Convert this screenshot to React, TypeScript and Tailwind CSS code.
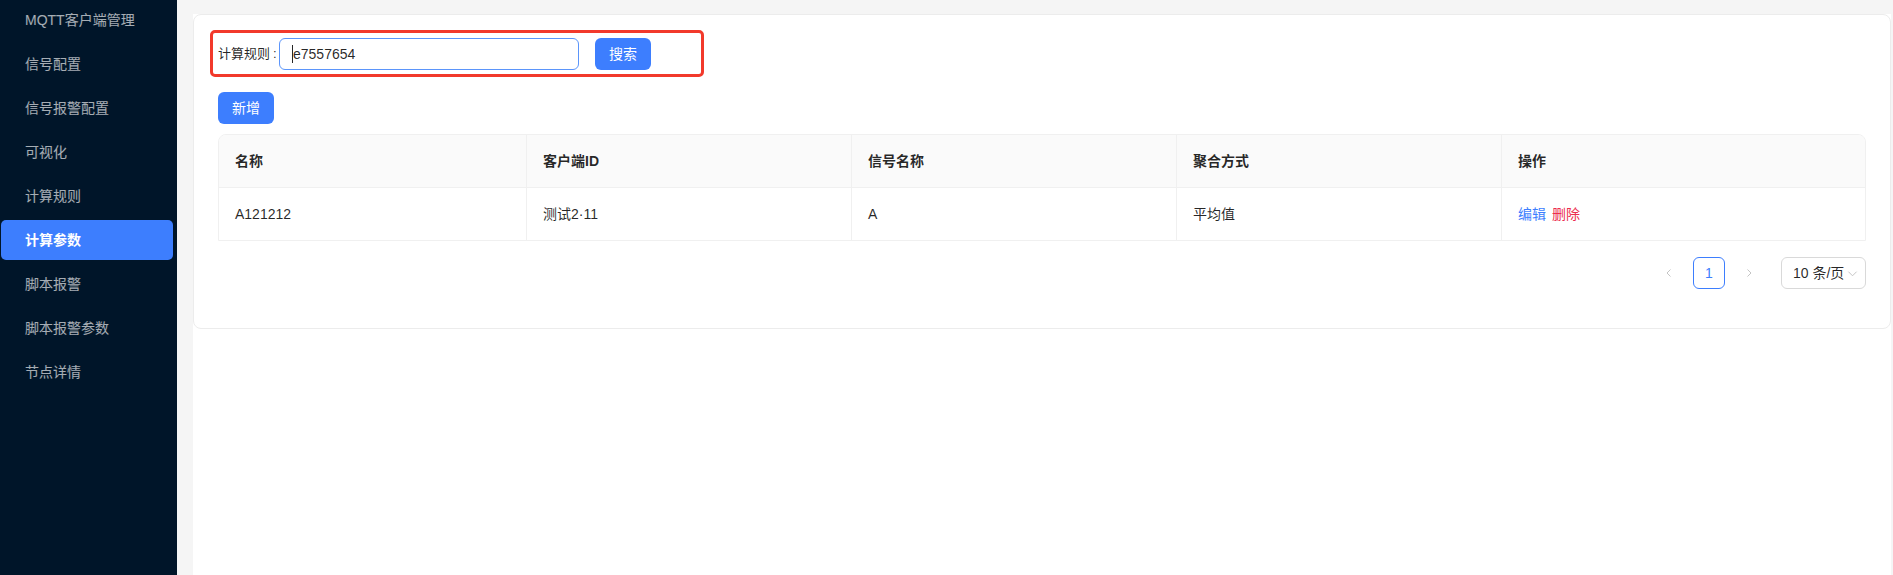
import React from 'react';

const menuItems = [
  'MQTT客户端管理',
  '信号配置',
  '信号报警配置',
  '可视化',
  '计算规则',
  '计算参数',
  '脚本报警',
  '脚本报警参数',
  '节点详情',
];

const columns = ['名称', '客户端ID', '信号名称', '聚合方式', '操作'];

function Sidebar() {
  return (
    <aside className="w-[177px] shrink-0 bg-[#001529]">
      <ul>
        {menuItems.map((item) => {
          const active = item === '计算参数';
          return (
            <li
              key={item}
              className={`mb-1 ml-[1px] flex h-10 w-[172px] items-center rounded-[5px] pl-6 text-[14px] ${
                active ? 'bg-[#3d7efe] text-white font-semibold' : 'text-white/65'
              }`}
            >
              {item}
            </li>
          );
        })}
      </ul>
    </aside>
  );
}

function Pagination() {
  return (
    <div className="mt-4 flex items-center justify-end">
      <span className="flex h-8 w-8 items-center justify-center text-[#c4c4c4]">
        <svg width="10" height="10" viewBox="0 0 10 10" fill="none" stroke="currentColor" strokeWidth="1">
          <path d="M6.5 1.5 3 5l3.5 3.5" />
        </svg>
      </span>
      <span className="ml-2 flex h-8 w-8 items-center justify-center rounded-md border border-[#3d7efe] text-[14px] text-[#3d7efe]">
        1
      </span>
      <span className="ml-2 flex h-8 w-8 items-center justify-center text-[#c4c4c4]">
        <svg width="10" height="10" viewBox="0 0 10 10" fill="none" stroke="currentColor" strokeWidth="1">
          <path d="M3.5 1.5 7 5 3.5 8.5" />
        </svg>
      </span>
      <div className="ml-4 flex h-8 w-[85px] items-center justify-between whitespace-nowrap rounded-md border border-[#d9d9d9] pl-[11px] pr-[7px] text-[14px] text-black/85">
        <span>10 条/页</span>
        <svg width="11" height="11" viewBox="0 0 12 12" fill="none" stroke="#bfbfbf" strokeWidth="1">
          <path d="M1.5 4 6 8.5 10.5 4" />
        </svg>
      </div>
    </div>
  );
}

export default function App() {
  return (
    <div className="flex h-[575px] w-full font-['Liberation_Sans','Noto_Sans_CJK_SC',sans-serif]">
      <Sidebar />

      <main className="flex-1 bg-[#f5f5f5] pl-4 pr-[2px] pt-[14px]">
        <div className="h-full bg-white">
          <div className="rounded-lg border border-[#ececec] px-6 pt-[23px] pb-[39px]">
            {/* Search form */}
            <div className="relative flex h-8 items-center">
              <div className="pointer-events-none absolute -left-2 -top-2 h-[47px] w-[494px] rounded-[5px] border-[3px] border-[#f2392b]" />
              <label className="w-[61px] whitespace-nowrap text-[13px] text-black/85">
                计算规则<span className="ml-[3px]">:</span>
              </label>
              <div className="flex h-8 w-[300px] items-center rounded-md border border-[#5b95fb] px-3 text-[14px] text-black/85">
                <span className="h-[18px] w-px bg-black/85" />
                <span>e7557654</span>
              </div>
              <button className="ml-4 h-8 w-14 rounded-md bg-[#3d7efe] text-[14px] text-white">搜索</button>
            </div>

            <button className="mt-[22px] h-8 w-14 rounded-md bg-[#3d7efe] text-[14px] text-white">新增</button>

            {/* Table */}
            <div className="mt-[10px] overflow-hidden rounded-t-lg border border-[#f0f0f0] text-[14px] text-black/85">
              <div className="grid grid-cols-[308px_325px_325px_325px_1fr] border-b border-[#f0f0f0] bg-[#fafafa]">
                {columns.map((c, i) => (
                  <div
                    key={c}
                    className={`flex h-[52px] items-center px-4 font-semibold ${
                      i < columns.length - 1 ? 'border-r border-[#f0f0f0]' : ''
                    }`}
                  >
                    {c}
                  </div>
                ))}
              </div>
              <div className="grid grid-cols-[308px_325px_325px_325px_1fr]">
                <div className="flex h-[52px] items-center border-r border-[#f0f0f0] px-4">A121212</div>
                <div className="flex h-[52px] items-center border-r border-[#f0f0f0] px-4">测试2·11</div>
                <div className="flex h-[52px] items-center border-r border-[#f0f0f0] px-4">A</div>
                <div className="flex h-[52px] items-center border-r border-[#f0f0f0] px-4">平均值</div>
                <div className="flex h-[52px] items-center gap-[6px] px-4">
                  <a className="text-[#3d7efe]">编辑</a>
                  <a className="text-[#ec2d4e]">删除</a>
                </div>
              </div>
            </div>

            <Pagination />
          </div>
        </div>
      </main>
    </div>
  );
}
